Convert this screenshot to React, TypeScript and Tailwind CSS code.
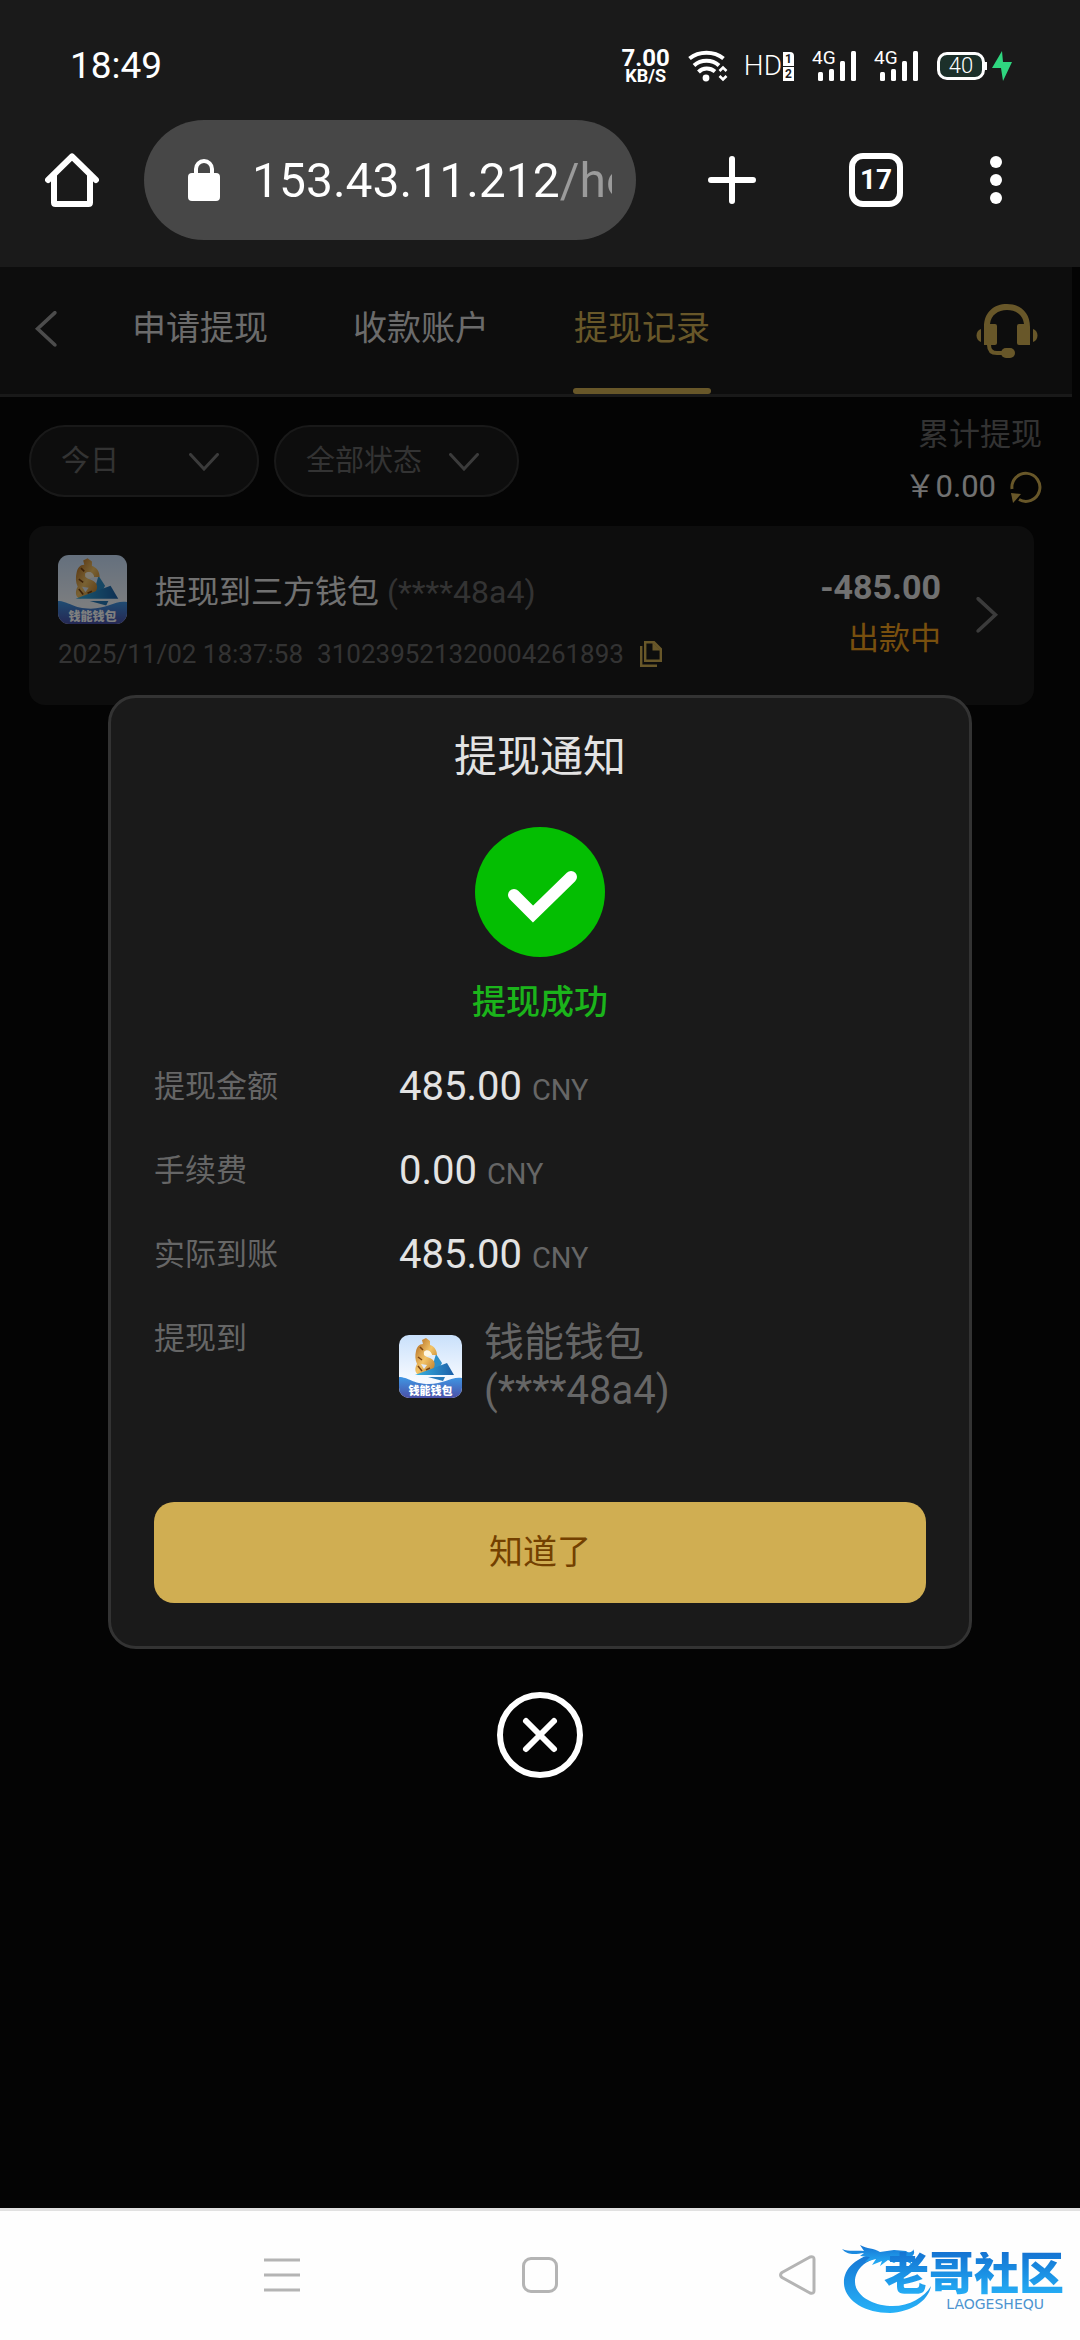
import React, { useId, useState } from "react";

type IconProps = { className?: string };

const TABS = ["申请提现", "收款账户", "提现记录"];

const AMOUNTS = [
  { label: "提现金额", value: "485.00" },
  { label: "手续费", value: "0.00" },
  { label: "实际到账", value: "485.00" },
];

function WifiIcon({ className }: IconProps) {
  return (
    <svg className={className} viewBox="0 0 40 32" fill="none" stroke="white" strokeWidth="4" aria-hidden="true">
      <path d="M1.5 8.5C11 .8 26 .8 35.500 8.500" />
      <path d="M6 15.500C13 9.200 24 9.200 31 15.500" />
      <path d="M10.500 22C15 17.500 22 17.500 27 21.500" />
      <circle cx="18" cy="28" r="3.400" fill="white" stroke="none" />
      <path d="M31.500 21L35 17.500L38.500 21M31.500 26L35 29.500L38.500 26" strokeWidth="2.600" />
    </svg>
  );
}

function Signal() {
  return (
    <div className="relative h-8 w-11">
      <span className="absolute -top-1 left-0 text-[19px] leading-6">4G</span>
      <svg className="h-8 w-11" viewBox="0 0 44 32" fill="white" aria-hidden="true">
        <rect x="6" y="22" width="5" height="9" rx="1.500" />
        <rect x="17" y="19" width="5" height="12" rx="1.500" />
        <rect x="28" y="11" width="5" height="20" rx="1.500" />
        <rect x="39" y="1" width="5" height="30" rx="1.500" />
      </svg>
    </div>
  );
}

function HomeIcon({ className }: IconProps) {
  return (
    <svg
      className={className}
      viewBox="0 0 54 54"
      fill="none"
      stroke="white"
      strokeWidth="6"
      strokeLinecap="round"
      strokeLinejoin="round"
      aria-hidden="true"
    >
      <path d="M3 27L27 3.500L51 27" />
      <path d="M9 22V49.500Q9 51 10.500 51H43.500Q45 51 45 49.500V22" />
    </svg>
  );
}

function LockIcon({ className }: IconProps) {
  return (
    <svg className={className} viewBox="0 0 32 42" fill="none" aria-hidden="true">
      <rect y="14" width="32" height="28" rx="4" fill="white" />
      <path d="M8 15V10a8 8 0 0 1 16 0v5" stroke="white" strokeWidth="4" />
    </svg>
  );
}

function Chevron({ className }: IconProps) {
  return (
    <svg className={className} viewBox="0 0 30 18" fill="none" stroke="currentColor" strokeWidth="3" aria-hidden="true">
      <path d="M1.500 1.500L15 16L28.500 1.500" strokeLinecap="round" />
    </svg>
  );
}

function HeadsetIcon({ className }: IconProps) {
  return (
    <svg className={className} viewBox="0 0 62 56" fill="currentColor" aria-hidden="true">
      <path d="M8 42V24C8 9 18 1 31 1s23 8 23 23v18H43a2 2 0 0 1-2-2V23a2 2 0 0 1 2-2h5C47 12 40 7 31 7S15 12 14 21h5a2 2 0 0 1 2 2v17a2 2 0 0 1-2 2Z" />
      <path d="M5 26v13C-1 37-1 28 5 26ZM57 26v13c6-2 6-11 0-13Z" />
      <path d="M13 42c0 6 3 8 8 8h6" fill="none" stroke="currentColor" strokeWidth="4" />
      <rect x="25" y="45" width="14" height="10" rx="5" />
    </svg>
  );
}

function RefreshIcon({ className }: IconProps) {
  return (
    <svg className={className} viewBox="0 0 32 32" fill="none" aria-hidden="true">
      <path d="M2 18A14 14 0 1 1 9 28.500" stroke="currentColor" strokeWidth="3" />
      <path d="M1 22L11 23L3 32Z" fill="currentColor" />
    </svg>
  );
}

function CopyIcon({ className }: IconProps) {
  return (
    <svg className={className} viewBox="0 0 22 26" fill="none" stroke="currentColor" strokeWidth="2.400" aria-hidden="true">
      <path d="M1.200 5V24.800H17" />
      <path d="M5.200 1.200H14L20.800 8V19.800H5.200Z" />
      <path d="M12.500 1V9.500H21Z" fill="currentColor" stroke="none" />
    </svg>
  );
}

function WalletLogo({ className }: IconProps) {
  const id = useId();
  return (
    <svg className={className} viewBox="0 0 63 63" role="img" aria-label="钱能钱包">
      <defs>
        <linearGradient id={`${id}sky`} x1="0" y1="0" x2="0" y2="1">
          <stop offset="0" stopColor="#c9e0fb" />
          <stop offset="0.7" stopColor="#f6faff" />
        </linearGradient>
        <linearGradient id={`${id}sea`} x1="0" y1="0" x2="0" y2="1">
          <stop offset="0" stopColor="#3f97e4" />
          <stop offset="1" stopColor="#4a50a8" />
        </linearGradient>
        <linearGradient id={`${id}gold`} x1="0" y1="0" x2="1" y2="1">
          <stop offset="0" stopColor="#a85f18" />
          <stop offset="0.5" stopColor="#f3c468" />
          <stop offset="1" stopColor="#b06c1c" />
        </linearGradient>
        <linearGradient id={`${id}sail`} x1="0" y1="0" x2="1" y2="0">
          <stop offset="0" stopColor="#37b3e2" />
          <stop offset="1" stopColor="#1c5fa8" />
        </linearGradient>
      </defs>
      <rect width="63" height="63" rx="10" fill={`url(#${id}sky)`} />
      <path d="M37 19L43 28L40 34L32 36Z" fill="#2d8fc8" />
      <path
        d="M23 5L27 3L31 6L31 10C35 11 38 15 38 20L33 20C32 16 28 14 25 17C24 20 27 22 31 23C36 25 37 30 34 34L29 37L20 40C15 38 16 32 18 29C16 25 16 20 17 16C18 12 20 9 24 9Z"
        fill={`url(#${id}gold)`}
      />
      <path d="M25 17C28 14 32 16 33 20C30 21 28 22 25 20Z" fill="#fff7e2" />
      <path d="M22 29L28 30L25 34Z" fill="#dfeaf8" />
      <path d="M19 31L23 36M21 12L24 15M27 35L31 33M19 22L23 25" stroke="#7b4310" strokeWidth="1.500" />
      <path d="M16 40L48 28L55 40Z" fill={`url(#${id}sail)`} />
      <path d="M29 42H46L44 46Z" fill="#2779b9" />
      <path d="M0 42C9 42 14 49 30 49C45 49 53 41 63 43V53A10 10 0 0 1 53 63H10A10 10 0 0 1 0 53Z" fill={`url(#${id}sea)`} />
      <text x="31.500" y="60" textAnchor="middle" fontSize="11" fontWeight="900" fill="white">
        钱能钱包
      </text>
    </svg>
  );
}

function DragonIcon({ className }: IconProps) {
  return (
    <svg className={className} viewBox="0 0 92 74" aria-hidden="true">
      <defs>
        <linearGradient id="dragon" x1="0" y1="0" x2="0" y2="1">
          <stop offset="0" stopColor="#1573d2" />
          <stop offset="1" stopColor="#27b2f8" />
        </linearGradient>
      </defs>
      <g fill="url(#dragon)">
        <path d="M40 12C14 17 3 30 4 44C5 60 24 73 50 73C70 72 88 62 91 46C84 58 68 67 50 66C30 65 15 54 15 42C15 30 24 20 44 16Z" />
        <path d="M2 9C9 12 16 10 24 11L20 5C27 9 34 8 40 12L54 10L66 11C69 14 74 11 73 9C77 15 70 19 64 18L71 19V24C64 19 58 21 54 23L48 20L40 26L42 21L32 25L36 19L25 22L30 17L20 16L24 13C16 14 8 16 2 9Z" />
      </g>
    </svg>
  );
}

function StatusBar() {
  return (
    <div className="flex h-[120px] items-center justify-between pt-3 pr-[68px] pl-[70px] text-white">
      <span className="text-[37px] leading-10">18:49</span>
      <div className="flex items-center">
        <div className="mr-[18px] text-center font-bold">
          <div className="text-[24px] leading-5">7.00</div>
          <div className="text-[18px] leading-4">KB/S</div>
        </div>
        <WifiIcon className="mr-4 h-8 w-10" />
        <div className="mr-[18px] flex items-center gap-px">
          <span className="text-[28px] leading-8 font-light">HD</span>
          <span className="flex flex-col gap-px text-center text-[12px] leading-[14px] font-bold text-[#1a1a1a]">
            <span className="w-[11px] rounded-tr-sm bg-white">1</span>
            <span className="w-[11px] bg-white">2</span>
          </span>
        </div>
        <div className="mr-[19px] flex gap-[18px]">
          <Signal />
          <Signal />
        </div>
        <div className="flex h-7 w-12 items-center justify-center rounded-[10px] border-3 border-white bg-[#1c302a] text-[22px] leading-6 font-light">
          40
        </div>
        <div className="mr-[5px] h-2 w-[2px] bg-white" />
        <svg className="h-8 w-5" viewBox="0 0 20 32" fill="#2fd67f" aria-hidden="true">
          <path d="M10 1L0 18H9L11 31L20 12H11Z" />
        </svg>
      </div>
    </div>
  );
}

function BrowserBar() {
  return (
    <div className="flex items-center pr-[78px] pb-[27px] pl-[45px]">
      <button type="button" aria-label="主页">
        <HomeIcon className="size-[54px]" />
      </button>
      <div className="ml-[45px] flex h-[120px] min-w-0 flex-1 items-center rounded-full bg-[#474747] pr-6 pl-[44px]">
        <LockIcon className="h-[42px] w-8 shrink-0" />
        <input
          type="text"
          aria-label="网址"
          defaultValue="153.43.11.212/home"
          className="ml-8 h-16 min-w-0 flex-1 bg-linear-[90deg,white_306px,#9b9b9b_306px] bg-clip-text pt-[2px] text-[48px] leading-16 text-transparent outline-none"
        />
      </div>
      <button type="button" aria-label="新标签页" className="ml-[72px]">
        <svg className="size-12" viewBox="0 0 48 48" stroke="white" strokeWidth="6" strokeLinecap="round" aria-hidden="true">
          <path d="M24 3V45M3 24H45" />
        </svg>
      </button>
      <button
        type="button"
        className="ml-[93px] flex size-[54px] items-center justify-center rounded-[14px] border-6 border-white text-[28px] leading-8 font-bold text-white"
      >
        17
      </button>
      <button type="button" aria-label="更多" className="ml-[87px] flex flex-col gap-[6px]">
        <span className="size-3 rounded-full bg-white" />
        <span className="size-3 rounded-full bg-white" />
        <span className="size-3 rounded-full bg-white" />
      </button>
    </div>
  );
}

function PageTabs() {
  return (
    <div className="flex h-[130px] items-stretch border-b-3 border-[#333] bg-[#1a1a1a] pr-[34px] pl-8">
      <button type="button" aria-label="返回" className="flex w-7 items-center justify-center pb-1 text-[#999]">
        <Chevron className="w-9 shrink-0 rotate-90" />
      </button>
      <nav className="ml-[71px] flex gap-[83px]">
        {TABS.map((tab) => {
          const active = tab === "提现记录";
          return (
            <a
              key={tab}
              href="#"
              className={[
                "relative flex w-[138px] items-center justify-center pb-[6px] text-[34px] leading-12 whitespace-nowrap",
                active ? "text-[#d0ae52]" : "text-[#d6d6d6]",
              ].join(" ")}
            >
              {tab}
              {active ? <span className="absolute inset-x-0 bottom-0 h-[6px] rounded-full bg-[#d0ae52]" /> : null}
            </a>
          );
        })}
      </nav>
      <button type="button" aria-label="客服" className="ml-auto text-[#d0ae52]">
        <HeadsetIcon className="h-14 w-[62px]" />
      </button>
    </div>
  );
}

function Filter({ label, options, className }: { label: string; options: string[]; className: string }) {
  return (
    <div className={`relative h-[72px] ${className}`}>
      <select
        aria-label={label}
        className="size-full appearance-none rounded-full border-2 border-[#333] bg-[#1a1a1a] pt-[2px] pl-[30px] text-[29px] text-[#666] outline-none"
      >
        {options.map((o) => (
          <option key={o}>{o}</option>
        ))}
      </select>
      <Chevron className="pointer-events-none absolute top-7 right-10 w-[30px] text-[#777]" />
    </div>
  );
}

function Record() {
  return (
    <div className="mt-[13px] mr-[38px] ml-[29px] flex items-center rounded-[16px] bg-[#1a1a1a] pt-[29px] pr-[29px] pb-[31px] pl-[29px]">
      <div>
        <div className="flex items-center">
          <WalletLogo className="size-[69px]" />
          <div className="ml-7 pt-1 text-[32px] leading-12 text-[#e3e3e3]">
            提现到三方钱包 <span className="text-[#666]">(****48a4)</span>
          </div>
        </div>
        <div className="mt-[10px] flex items-center text-[26px] leading-10 text-[#666]">
          <span>2025/11/02 18:37:58</span>
          <span className="ml-[14px]">310239521320004261893</span>
          <button type="button" aria-label="复制" className="ml-4 text-[#d0ae52]">
            <CopyIcon className="h-[26px] w-[22px]" />
          </button>
        </div>
      </div>
      <div className="ml-auto pb-1 text-right">
        <div className="text-[34px] leading-[52px] font-bold text-[#e3e3e3]">-485.00</div>
        <div className="text-[31px] leading-[52px] text-[#f0a01c]">出款中</div>
      </div>
      <Chevron className="ml-7 w-9 -rotate-90 text-[#777]" />
    </div>
  );
}

function NoticeDialog({ onClose }: { onClose: () => void }) {
  return (
    <div className="absolute inset-0 flex flex-col items-center justify-center bg-black/50 pb-[3px]">
      <div
        role="dialog"
        aria-labelledby="notice-title"
        className="flex w-4/5 flex-col rounded-[28px] border-3 border-[#333] bg-[#1a1a1a] px-[43px] pt-[27px] pb-[43px]"
      >
        <h2 id="notice-title" className="text-center text-[43px] leading-16 text-[#e3e3e3]">
          提现通知
        </h2>
        <svg className="mx-auto mt-[38px] size-[130px]" viewBox="0 0 130 130" fill="none" aria-hidden="true">
          <circle cx="65" cy="65" r="65" fill="#04be02" />
          <path d="M39 68L58 87L96 50" stroke="white" strokeWidth="12" strokeLinecap="round" />
        </svg>
        <p className="mt-5 text-center text-[34px] leading-[50px] font-medium text-[#1bb41b]">提现成功</p>

        <dl className="mt-9 flex flex-col gap-9">
          {AMOUNTS.map((row) => (
            <div key={row.label} className="flex h-12 leading-12">
              <dt className="w-[245px] text-[31px] text-[#666]">{row.label}</dt>
              <dd className="text-[40px] text-[#e3e3e3]">
                {row.value} <span className="text-[29px] text-[#666]">CNY</span>
              </dd>
            </div>
          ))}
          <div className="flex leading-12 text-[#666]">
            <dt className="w-[245px] text-[31px]">提现到</dt>
            <dd className="mt-1 flex items-center gap-[22px] text-[40px]">
              <WalletLogo className="size-[63px]" />
              <span>
                钱能钱包
                <br />
                (****48a4)
              </span>
            </dd>
          </div>
        </dl>

        <button
          type="button"
          onClick={onClose}
          className="mt-[87px] h-[101px] rounded-[20px] bg-[#d0ae52] text-[34px] text-[#734000]"
        >
          知道了
        </button>
      </div>
      <button type="button" aria-label="关闭" onClick={onClose} className="mt-[43px]">
        <svg className="size-[86px]" viewBox="0 0 86 86" fill="none" stroke="white" strokeWidth="6" aria-hidden="true">
          <circle cx="43" cy="43" r="40" />
          <path d="M29 29L57 57M57 29L29 57" strokeLinecap="round" />
        </svg>
      </button>
    </div>
  );
}

function SystemNav() {
  return (
    <footer className="relative grid h-[132px] grid-cols-3 items-center border-t-3 border-[#e1e1e1] bg-[#fefefe] px-[153px] pb-[2px] text-[#b4b4b4]">
      <button type="button" aria-label="菜单" className="mx-auto">
        <svg className="size-10" viewBox="0 0 40 40" stroke="currentColor" strokeWidth="3" aria-hidden="true">
          <path d="M2 5H38M2 20H38M2 35H38" />
        </svg>
      </button>
      <button type="button" aria-label="桌面" className="mx-auto size-9 rounded-[9px] border-3 border-[#b4b4b4]" />
      <button type="button" aria-label="返回" className="mx-auto">
        <svg className="h-10 w-[38px]" viewBox="0 0 38 40" fill="none" stroke="currentColor" strokeWidth="3" aria-hidden="true">
          <path d="M3 17.500L31 2Q35 1 35 4V36Q35 39 31 38L3 22.500Q0 20 3 17.500Z" strokeLinejoin="round" />
        </svg>
      </button>
      <div className="absolute right-4 bottom-[26px] flex h-[74px] w-[224px] items-start">
        <DragonIcon className="h-[74px] w-[92px]" />
        <div className="absolute right-0 bottom-1 flex flex-col items-end">
          <span className="bg-linear-to-b from-[#1573d2] to-[#27b2f8] bg-clip-text text-[45px] leading-[46px] font-black whitespace-nowrap text-transparent">
            老哥社区
          </span>
          <span className="mr-5 font-['DejaVu_Sans'] text-[14px] leading-3 text-[#4d94d0]">LAOGESHEQU</span>
        </div>
      </div>
    </footer>
  );
}

export default function App() {
  const [open, setOpen] = useState(true);

  return (
    <div className="flex min-h-screen flex-col bg-[#080808] font-[Roboto,'Noto_Sans_CJK_SC',sans-serif]" lang="zh-CN">
      <header className="bg-[#1a1a1a]">
        <StatusBar />
        <BrowserBar />
      </header>

      <main className="relative flex-1 pr-2">
        <PageTabs />
        <div className="flex items-center pt-3 pr-[30px] pl-[29px]">
          <Filter label="日期" options={["今日", "昨日", "近7日"]} className="w-[230px]" />
          <Filter label="状态" options={["全部状态", "出款中", "提现成功"]} className="ml-[15px] w-[245px]" />
          <div className="ml-auto text-right text-[31px] leading-[52px]">
            <div className="text-[#666]">累计提现</div>
            <div className="flex items-center text-[#e3e3e3]">
              ￥0.00
              <button type="button" aria-label="刷新" className="ml-[14px] text-[#d0ae52]">
                <RefreshIcon className="size-8" />
              </button>
            </div>
          </div>
        </div>
        <Record />
        {open ? <NoticeDialog onClose={() => setOpen(false)} /> : null}
      </main>

      <SystemNav />
    </div>
  );
}
